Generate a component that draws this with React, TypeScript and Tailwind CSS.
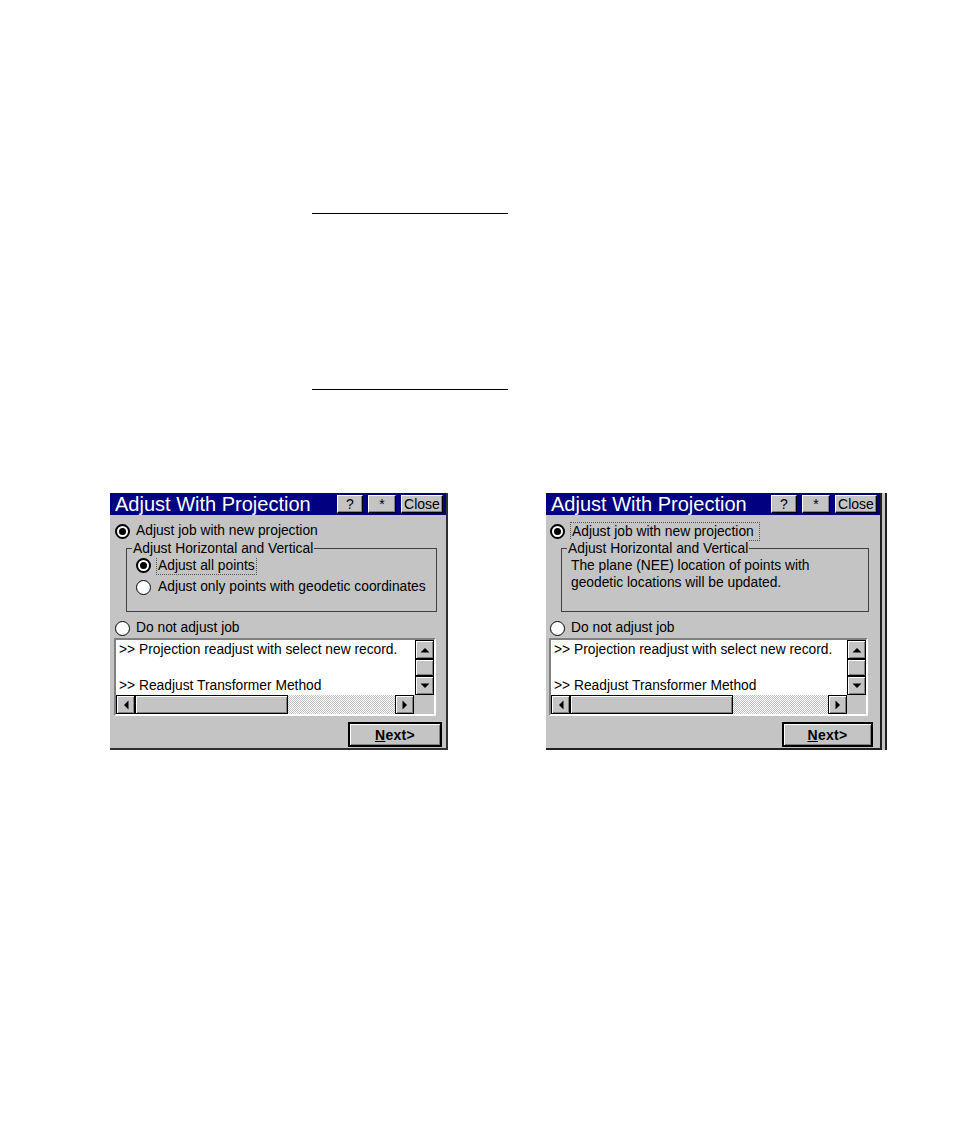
import React from "react";

// Windows CE style dialog captures on a white manual page

const GRAY = "bg-[#c4c4c4]";

function Radio({ on }: { on?: boolean }) {
  if (on) {
    return (
      <span className="w-[15px] h-[15px] rounded-full border-[2.5px] border-black bg-white flex items-center justify-center shrink-0">
        <span className="w-[7px] h-[7px] rounded-full bg-black" />
      </span>
    );
  }
  return <span className="w-[15px] h-[15px] rounded-full border-[1.5px] border-black bg-white shrink-0" />;
}

function TitleButton({ label, w }: { label: string; w: string }) {
  return (
    <div
      className={`${w} h-[18px] ${GRAY} border border-t-white border-l-white border-r-black border-b-black shadow-[inset_-1px_-1px_0_#808080] flex items-center justify-center text-[14px] leading-none text-black`}
    >
      {label}
    </div>
  );
}

function TitleBar() {
  return (
    <div className="h-[22px] bg-[#000080] flex items-center pl-[5px] pr-[3px]">
      <span className="text-white text-[20px] leading-none flex-1 whitespace-nowrap">Adjust With Projection</span>
      <div className="flex gap-[5px]">
        <TitleButton label="?" w="w-[26px]" />
        <TitleButton label="*" w="w-[28px]" />
        <TitleButton label="Close" w="w-[42px]" />
      </div>
    </div>
  );
}

function Arrow({ dir }: { dir: "up" | "down" | "left" | "right" }) {
  const pts = {
    up: "0.5,7.5 5,3 9.5,7.5",
    down: "0.5,2.5 5,7 9.5,2.5",
    left: "7.5,0.5 3,5 7.5,9.5",
    right: "2.5,0.5 7,5 2.5,9.5",
  }[dir];
  return (
    <svg width="10" height="10" viewBox="0 0 10 10">
      <polygon points={pts} fill="#000" />
    </svg>
  );
}

function ScrollBtn({ children, className = "" }: { children?: React.ReactNode; className?: string }) {
  return (
    <div
      className={`${GRAY} border border-black shadow-[inset_1px_1px_0_#fff,inset_-1px_-1px_0_#808080] flex items-center justify-center shrink-0 ${className}`}
    >
      {children}
    </div>
  );
}

function ListBox({ ml, w, thumb, track }: { ml: string; w: string; thumb: string; track: string }) {
  return (
    <div
      className={`${ml} ${w} h-[78px] border-2 border-t-[#808080] border-l-[#808080] border-r-white border-b-white flex flex-col`}
    >
      <div className="flex h-[55px]">
        <div className="flex-1 bg-white pl-[3px] pt-[1px] text-[13.8px] leading-[18px] overflow-hidden whitespace-nowrap">
          <div>&gt;&gt; Projection readjust with select new record.</div>
          <div>&nbsp;</div>
          <div>&gt;&gt; Readjust Transformer Method</div>
        </div>
        <div className="w-[19px] flex flex-col">
          <ScrollBtn className="h-[19px]">
            <Arrow dir="up" />
          </ScrollBtn>
          <ScrollBtn className="h-[17px]" />
          <ScrollBtn className="h-[19px]">
            <Arrow dir="down" />
          </ScrollBtn>
        </div>
      </div>
      <div className="flex h-[19px]">
        <ScrollBtn className="w-[19px]">
          <Arrow dir="left" />
        </ScrollBtn>
        <ScrollBtn className={thumb} />
        <div
          className={`${track} bg-[repeating-conic-gradient(#c4c4c4_0%_25%,#ffffff_0%_50%)] bg-[length:2px_2px]`}
        />
        <ScrollBtn className="w-[19px]">
          <Arrow dir="right" />
        </ScrollBtn>
        <div className={`w-[19px] ${GRAY}`} />
      </div>
    </div>
  );
}

function NextButton({ w }: { w: string }) {
  return (
    <div className={`${w} h-[25px] border-2 border-black ${GRAY} shadow-[inset_1px_1px_0_#fff,inset_-1px_-1px_0_#808080] flex items-center justify-center`}>
      <span className="font-bold text-[14px] leading-none tracking-[0.3px]">
        <span className="underline">N</span>ext&gt;
      </span>
    </div>
  );
}

function GroupBox({ ml, w, children, pad }: { ml: string; w: string; pad: string; children: React.ReactNode }) {
  return (
    <div className={`relative mt-[6px] ${ml} ${w} h-[64px] border border-[#404040] ${pad}`}>
      <span className={`absolute -top-[9px] left-[5px] ${GRAY} px-[1px] leading-[17px]`}>
        Adjust Horizontal and Vertical
      </span>
      {children}
    </div>
  );
}

function OptionsDialog() {
  return (
    <div className={`w-[338px] h-[257px] ${GRAY} border-r-2 border-b-2 border-[#303030] flex flex-col text-[13.8px] text-black`}>
      <TitleBar />
      <div className="mt-[6px] h-[21px] flex items-center pl-[5px] gap-[6px]">
        <Radio on />
        <span>Adjust job with new projection</span>
      </div>
      <GroupBox ml="ml-[16px]" w="w-[311px]" pad="pt-[5px] pl-[9px]">
        <div className="h-[22px] flex items-center gap-[5px]">
          <Radio on />
          <span className="border border-dotted border-[#555] px-[1px] leading-[17px]">Adjust all points</span>
        </div>
        <div className="h-[22px] flex items-center gap-[5px]">
          <Radio />
          <span className="px-[2px]">Adjust only points with geodetic coordinates</span>
        </div>
      </GroupBox>
      <div className="mt-[6px] h-[20px] flex items-center pl-[5px] gap-[6px]">
        <Radio />
        <span>Do not adjust job</span>
      </div>
      <ListBox ml="ml-[4px]" w="w-[322px]" thumb="w-[153px]" track="w-[107px]" />
      <div className="mt-[6px] flex justify-end pr-[4px]">
        <NextButton w="w-[94px]" />
      </div>
    </div>
  );
}

function InfoDialog() {
  return (
    <div className="flex">
      <div className={`w-[336px] h-[257px] ${GRAY} border-r-2 border-b-2 border-[#202020] flex flex-col text-[13.8px] text-black`}>
        <TitleBar />
        <div className="mt-[6px] h-[21px] flex items-center pl-[4px] gap-[5px]">
          <Radio on />
          <span className="border border-dotted border-[#555] pl-[1px] pr-[5px] leading-[17px]">Adjust job with new projection</span>
        </div>
        <GroupBox ml="ml-[15px]" w="w-[308px]" pad="pt-[8px] pl-[9px]">
          <div className="leading-[17px]">
            The plane (NEE) location of points with
            <br />
            geodetic locations will be updated.
          </div>
        </GroupBox>
        <div className="mt-[6px] h-[20px] flex items-center pl-[4px] gap-[6px]">
          <Radio />
          <span>Do not adjust job</span>
        </div>
        <ListBox ml="ml-[3px]" w="w-[319px]" thumb="w-[163px]" track="w-[95px]" />
        <div className="mt-[6px] flex justify-end pr-[7px]">
          <NextButton w="w-[91px]" />
        </div>
      </div>
      <div className={`w-[3px] h-[257px] ${GRAY}`} />
      <div className="w-[2px] h-[257px] bg-[#202020]" />
    </div>
  );
}

export default function App() {
  return (
    <div className="w-[954px] h-[1146px] bg-white overflow-hidden font-['Liberation_Sans',Arial,sans-serif]">
      <div className="pt-[213px] pl-[312px]">
        <div className="w-[196px] h-[176px] border-t border-black" />
        <div className="w-[196px] border-t border-black" />
      </div>
      <div className="mt-[103px] pl-[110px] flex gap-[98px]">
        <OptionsDialog />
        <InfoDialog />
      </div>
    </div>
  );
}
